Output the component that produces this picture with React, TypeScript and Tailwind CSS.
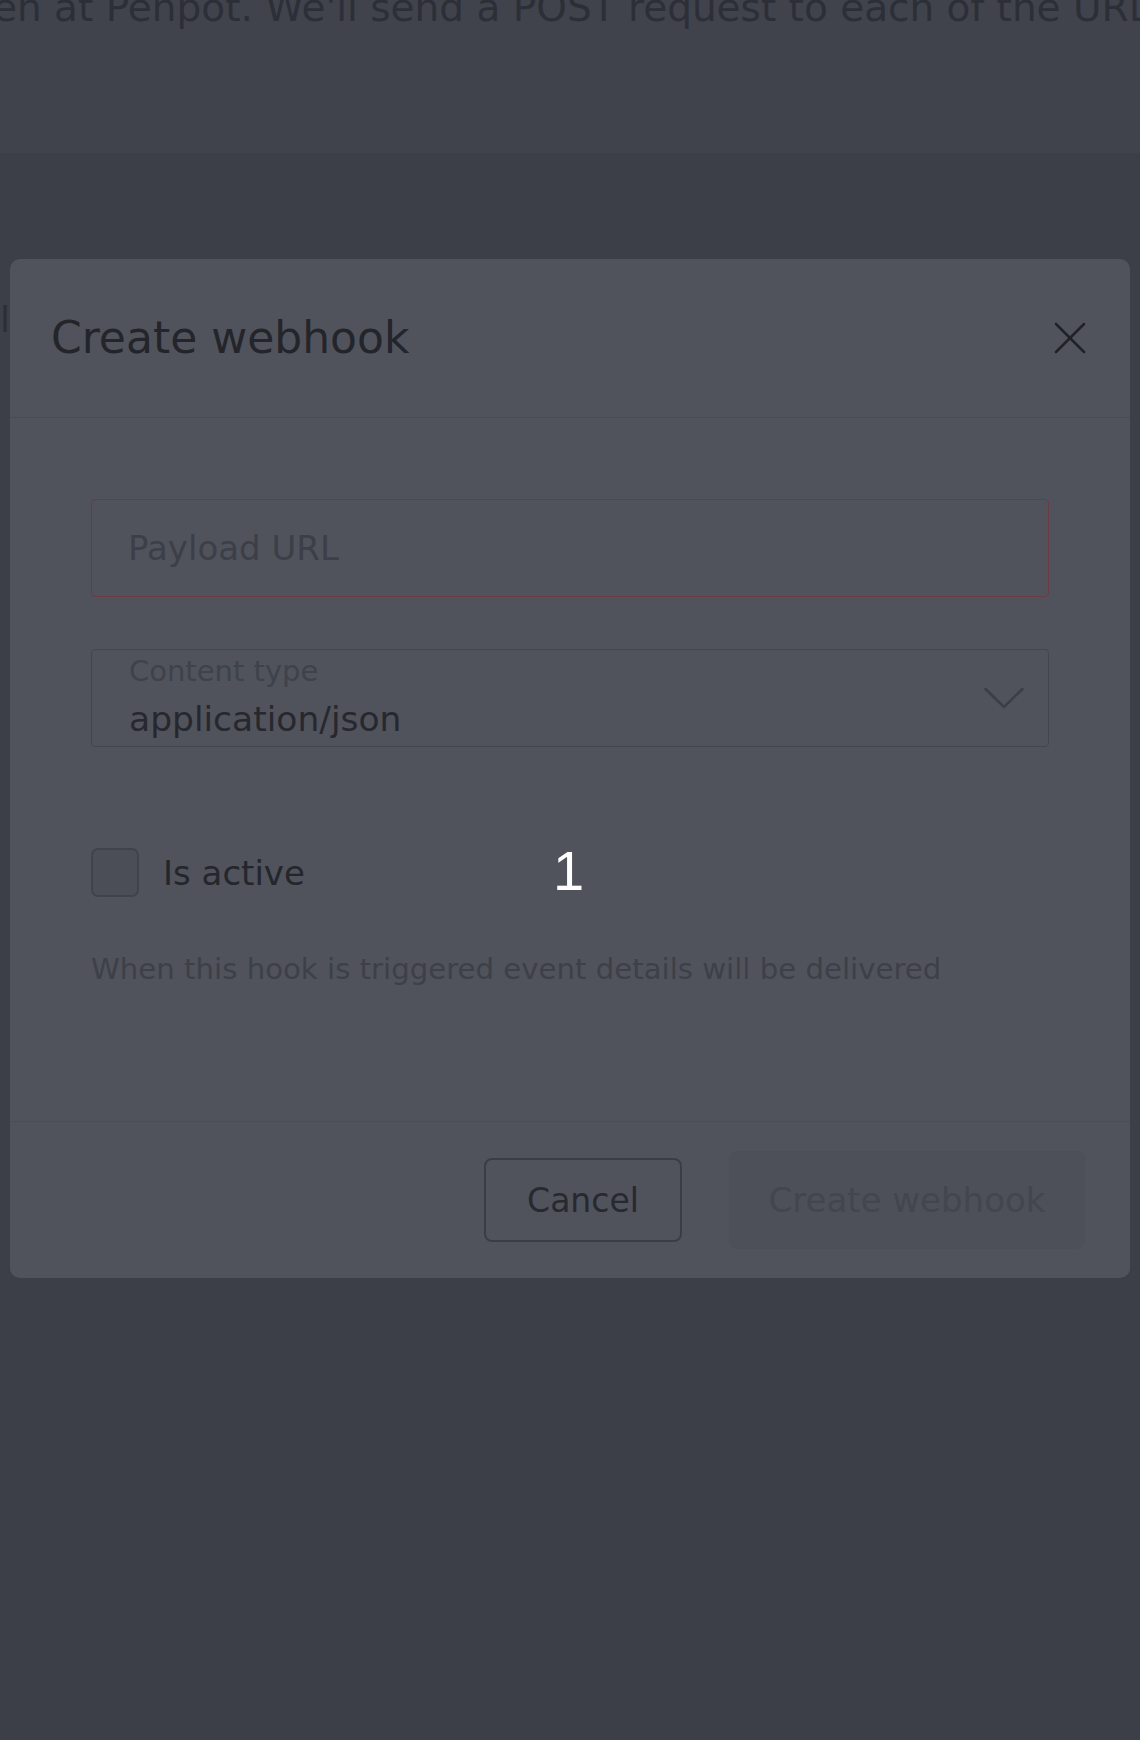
import React from 'react'

export default function App() {
  return (
    <div className="relative h-[1740px] w-full overflow-hidden bg-[#3c3f47] font-['DejaVu_Sans',sans-serif]">
      {/* Page header band (behind the overlay) */}
      <div className="h-[153px] overflow-hidden bg-[#40434b]">
        <p className="-ml-[7px] -mt-[12px] whitespace-nowrap text-[39px] leading-none text-[#2c2f37]">
          en at Penpot. We'll send a POST request to each of the URLs you provide.
        </p>
      </div>
      <div className="mt-[149px] w-[10px] overflow-hidden">
        <p className="whitespace-nowrap text-[36px] leading-none text-[#2c2f37]">l</p>
      </div>

      {/* Modal */}
      <div className="absolute left-[10px] top-[259px] w-[1120px] rounded-[10px] bg-[#50535c]">
        {/* Header */}
        <div className="flex h-[159px] items-center justify-between border-b border-[#494c55] pl-[41px] pr-[44px]">
          <h2 className="text-[44px] font-normal leading-none text-[#23252b]">Create webhook</h2>
          <button className="flex h-[32px] w-[32px] items-center justify-center text-[#202228]">
            <svg width="32" height="32" viewBox="0 0 32 32" fill="none" stroke="currentColor" strokeWidth="2.5" strokeLinecap="round">
              <line x1="2" y1="2" x2="30" y2="30" />
              <line x1="30" y1="2" x2="2" y2="30" />
            </svg>
          </button>
        </div>

        {/* Body */}
        <div className="px-[81px] pb-[137px] pt-[81px]">
          <input
            type="text"
            placeholder="Payload URL"
            className="block h-[98px] w-full rounded-[4px] border border-[#6b3b42] bg-transparent pl-[36px] text-[34px] text-[#26282e] outline-none placeholder:text-[#3c3f47]"
          />

          <div className="mt-[52px] flex h-[98px] items-center justify-between rounded-[4px] border border-[#42464e] pl-[37px] pr-[24px]">
            <div className="-mt-[3px] flex flex-col gap-[16px]">
              <span className="text-[29px] leading-none text-[#3e424a]">Content type</span>
              <span className="text-[34.5px] leading-none text-[#26282e]">application/json</span>
            </div>
            <svg width="40" height="24" viewBox="0 0 40 24" fill="none" stroke="#3a3e46" strokeWidth="2.5" strokeLinecap="round" strokeLinejoin="round">
              <polyline points="1.5,3 20,21 38.5,3" />
            </svg>
          </div>

          <div className="mt-[101px] flex items-center gap-[24px]">
            <div className="h-[49px] w-[48px] rounded-[7px] border-2 border-[#40434b] bg-[#4b4e57]"></div>
            <span className="text-[34px] leading-none text-[#24262c]">Is active</span>
          </div>

          <p className="mt-[58px] text-[29.2px] leading-none text-[#3d4048]">
            When this hook is triggered event details will be delivered
          </p>
        </div>

        {/* Footer */}
        <div className="flex h-[157px] items-center justify-end gap-[47px] border-t border-[#4a4d56] pr-[45px]">
          <button className="h-[84px] w-[198px] rounded-[8px] border-2 border-[#3a3d45] text-[33px] leading-none text-[#27292f]">
            Cancel
          </button>
          <button className="h-[98px] w-[356px] rounded-[8px] bg-[#4d5058] text-[34px] leading-none text-[#42464e]">
            Create webhook
          </button>
        </div>
      </div>

      {/* Step marker */}
      <span className="absolute left-[553px] top-[843px] font-['Liberation_Sans',Arial,sans-serif] text-[56px] leading-none text-white">
        1
      </span>
    </div>
  )
}
